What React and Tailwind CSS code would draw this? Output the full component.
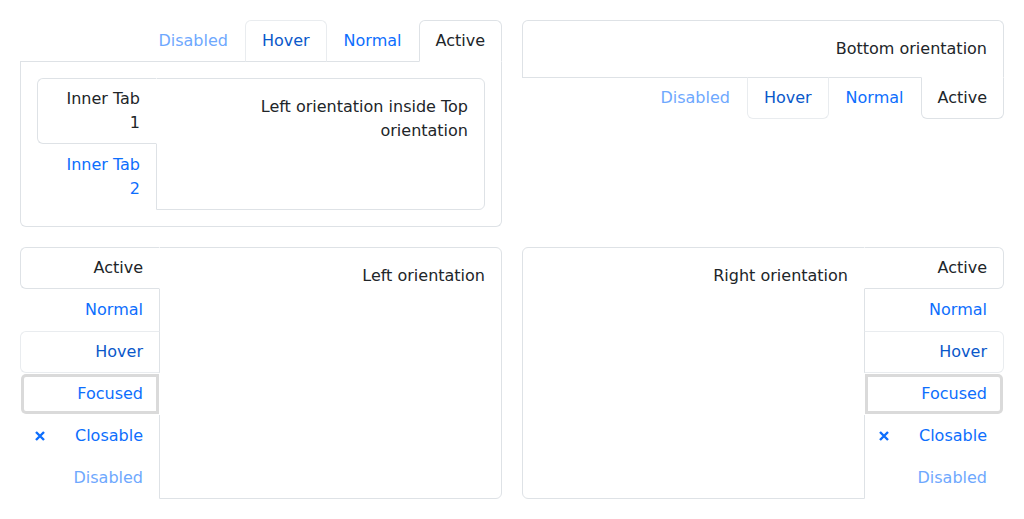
const BORDER = 'border-[#dee2e6]'

function TopTab({ kind, children, bottom }) {
  const base = bottom
    ? 'px-4 py-2 border rounded-b-[6px] -mt-px'
    : 'px-4 py-2 border rounded-t-[6px] -mb-px'
  const styles = {
    active: bottom
      ? 'bg-white border-x-[#dee2e6] border-b-[#dee2e6] border-t-white text-[#212529]'
      : 'bg-white border-x-[#dee2e6] border-t-[#dee2e6] border-b-white text-[#212529]',
    hover: bottom
      ? 'border-x-[#e9ecef] border-b-[#e9ecef] border-t-[#dee2e6] text-[#0a58ca]'
      : 'border-x-[#e9ecef] border-t-[#e9ecef] border-b-[#dee2e6] text-[#0a58ca]',
    normal: 'border-x-transparent border-y-transparent text-[#0d6efd]',
    disabled: 'border-x-transparent border-y-transparent text-[#6ea8fe]',
  }
  return <div className={`${base} ${styles[kind]}`}>{children}</div>
}

function CloseX() {
  return (
    <svg width="10" height="10" viewBox="0 0 10 10" className="shrink-0">
      <path d="M1 1 L9 9 M9 1 L1 9" stroke="#0d6efd" strokeWidth="2.4" strokeLinecap="butt" />
    </svg>
  )
}

function SideTab({ kind, side, children, closable }) {
  const left = side === 'left'
  const round = left ? 'rounded-l-[6px]' : 'rounded-r-[6px]'
  const styles = {
    active: left
      ? 'relative z-10 bg-white border-y-[#dee2e6] border-l-[#dee2e6] border-r-white text-[#212529]'
      : 'relative z-10 bg-white border-y-[#dee2e6] border-r-[#dee2e6] border-l-white text-[#212529]',
    hover: left
      ? 'relative z-10 bg-white border-y-[#e9ecef] border-l-[#e9ecef] border-r-[#dee2e6] text-[#0a58ca]'
      : 'relative z-10 bg-white border-y-[#e9ecef] border-r-[#e9ecef] border-l-[#dee2e6] text-[#0a58ca]',
    focused:
      'relative z-10 bg-white border-x-transparent border-y-transparent shadow-[inset_0_0_0_3px_#dadada] text-[#0d6efd]',
    normal: 'border-x-transparent border-y-transparent text-[#0d6efd]',
    disabled: 'border-x-transparent border-y-transparent text-[#6ea8fe]',
  }
  return (
    <div
      className={`h-[42px] border ${round} py-2 pr-4 ${
        closable ? 'pl-[14px] flex items-center justify-between' : 'pl-4 text-right'
      } ${styles[kind]}`}
    >
      {closable && <CloseX />}
      <span>{children}</span>
    </div>
  )
}

function SideTabs({ side }) {
  return (
    <div className={`w-[140px] shrink-0 flex flex-col ${side === 'left' ? '-mr-px' : '-ml-px'}`}>
      <SideTab side={side} kind="active">Active</SideTab>
      <SideTab side={side} kind="normal">Normal</SideTab>
      <SideTab side={side} kind="hover">Hover</SideTab>
      <SideTab side={side} kind="focused">Focused</SideTab>
      <SideTab side={side} kind="normal" closable>Closable</SideTab>
      <SideTab side={side} kind="disabled">Disabled</SideTab>
    </div>
  )
}

export default function App() {
  return (
    <div className="bg-white p-5 grid grid-cols-2 gap-5 font-['DejaVu_Sans',sans-serif] text-base leading-6 text-[#212529]">
      {/* top orientation with nested left tabs */}
      <div>
        <div className={`flex justify-end border-b ${BORDER}`}>
          <TopTab kind="disabled">Disabled</TopTab>
          <TopTab kind="hover">Hover</TopTab>
          <TopTab kind="normal">Normal</TopTab>
          <TopTab kind="active">Active</TopTab>
        </div>
        <div className={`border-x border-b ${BORDER} rounded-b-[6px] p-4`}>
          <div className="flex">
            <div className="w-[120px] shrink-0 flex flex-col -mr-px">
              <div className="relative z-10 bg-white border border-y-[#dee2e6] border-l-[#dee2e6] border-r-white rounded-l-[6px] px-4 py-2 text-right">
                Inner Tab 1
              </div>
              <div className="border border-x-transparent border-y-transparent px-4 py-2 text-right text-[#0d6efd]">
                Inner Tab 2
              </div>
            </div>
            <div className={`flex-1 border ${BORDER} rounded-r-[6px] p-4 text-right`}>
              Left orientation inside Top orientation
            </div>
          </div>
        </div>
      </div>

      {/* bottom orientation */}
      <div>
        <div className={`border-x border-t ${BORDER} rounded-t-[6px] p-4 text-right`}>Bottom orientation</div>
        <div className={`flex justify-end border-t ${BORDER}`}>
          <TopTab bottom kind="disabled">Disabled</TopTab>
          <TopTab bottom kind="hover">Hover</TopTab>
          <TopTab bottom kind="normal">Normal</TopTab>
          <TopTab bottom kind="active">Active</TopTab>
        </div>
      </div>

      {/* left orientation */}
      <div className="flex">
        <SideTabs side="left" />
        <div className={`flex-1 border ${BORDER} rounded-r-[6px] p-4 text-right`}>Left orientation</div>
      </div>

      {/* right orientation */}
      <div className="flex">
        <div className={`flex-1 border ${BORDER} rounded-l-[6px] p-4 text-right`}>Right orientation</div>
        <SideTabs side="right" />
      </div>
    </div>
  )
}
